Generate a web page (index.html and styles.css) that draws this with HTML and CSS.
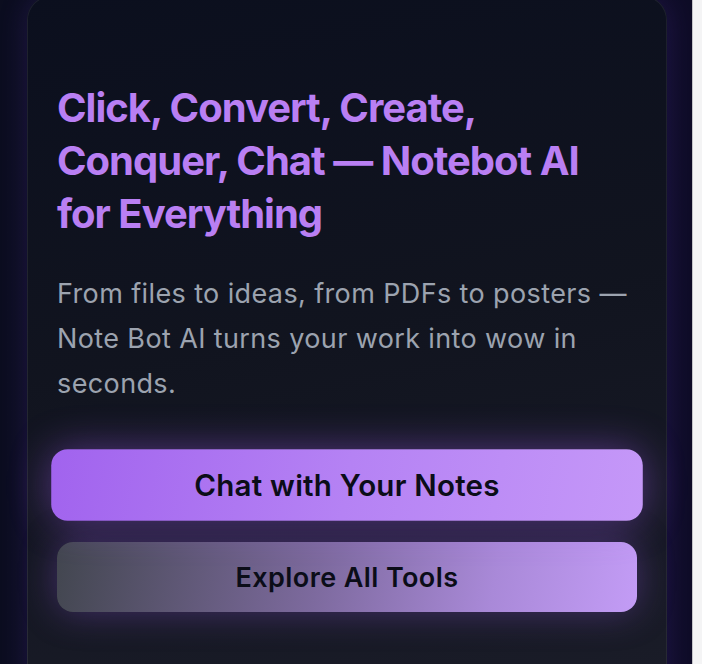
FILE: index.html
```html
<!DOCTYPE html>
<html lang="en">
<head>
<meta charset="utf-8">
<title>Notebot AI</title>
<link rel="stylesheet" href="styles.css">
</head>
<body>
<div class="page">
  <main class="main">
    <section class="card">
      <h1 class="title">Click, Convert, Create,<br>Conquer, Chat — Notebot AI<br>for Everything</h1>
      <p class="lead">From files to ideas, from PDFs to posters — Note Bot AI turns your work into wow in seconds.</p>
      <div class="actions">
        <button class="btn btn-primary">Chat with Your Notes</button>
        <button class="btn btn-secondary">Explore All Tools</button>
      </div>
    </section>
  </main>
  <div class="scrolltrack"></div>
</div>
</body>
</html>
```
FILE: styles.css
```css
html, body {
  margin: 0;
  padding: 0;
  height: 100%;
  overflow: hidden;
}
body {
  background: #0a0d1e;
  font-family: Inter, "Noto Sans", sans-serif;
}
.page {
  display: flex;
  height: 664px;
}
.main {
  flex: 1;
  padding: 0 25px 0 27px;
  background: linear-gradient(90deg, #0b0d1f 0%, #0c0e22 50%, #0e0c26 100%);
}
.scrolltrack {
  width: 9px;
  border-left: 1px solid #c4c4c8;
  background: #f4f4f5;
}
.card {
  margin-top: -4px;
  min-height: 740px;
  box-sizing: border-box;
  border-radius: 24px;
  border: 1px solid rgba(255, 255, 255, 0.07);
  background: linear-gradient(170deg, #0b0f1e 0%, #11141f 45%, #1b1d29 100%);
  box-shadow: 0 0 30px rgba(110, 60, 220, 0.2);
  padding: 84px 29px 0;
}
.title {
  margin: 0;
  font-size: 40px;
  line-height: 53px;
  font-weight: 700;
  letter-spacing: -0.025em;
  color: #b97ff3;
}
.lead {
  margin: 31px 0 0;
  font-size: 27px;
  line-height: 45px;
  color: #9ca3af;
  letter-spacing: 0.38px;
}
.actions {
  margin-top: 44px;
  display: flex;
  flex-direction: column;
  gap: 22px;
}
.btn {
  height: 70px;
  border: none;
  border-radius: 16px;
  font-family: Inter, "Noto Sans", sans-serif;
  font-weight: 600;
  color: #0b0d18;
}
.btn-primary {
  font-size: 29px;
  letter-spacing: 0.2px;
  transform: scale(1.02);
  background: linear-gradient(100deg, #a163ee 0%, #b582f4 50%, #c598f8 100%);
  box-shadow: 0 0 40px rgba(160, 90, 240, 0.45);
}
.btn-secondary {
  font-size: 27px;
  letter-spacing: 0.4px;
  background: linear-gradient(100deg, #42464f 0%, #7d6a9e 45%, #a989d8 75%, #c39cf6 100%);
  box-shadow: 0 0 36px rgba(150, 90, 230, 0.36);
}
```
